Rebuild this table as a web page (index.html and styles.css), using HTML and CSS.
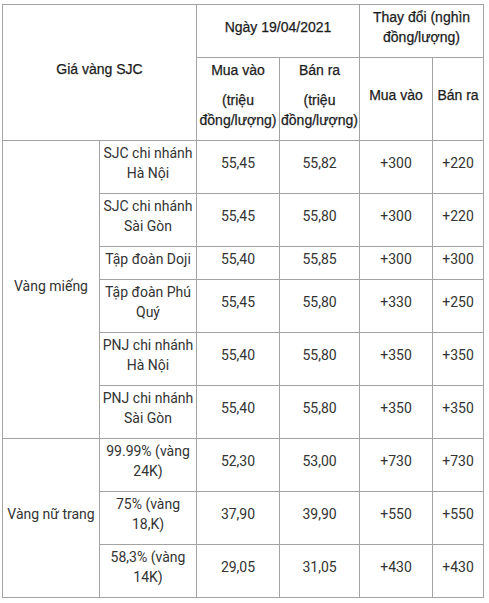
FILE: index.html
```html
<!DOCTYPE html>
<html lang="vi">
<head>
<meta charset="utf-8">
<title>Giá vàng SJC</title>
<link rel="stylesheet" href="styles.css">
</head>
<body>
<table class="gold">
  <colgroup>
    <col class="c1"><col class="c2"><col class="c3"><col class="c4"><col class="c5"><col class="c6">
  </colgroup>
  <thead>
    <tr>
      <th colspan="2" rowspan="2"><p>Giá vàng SJC</p></th>
      <th colspan="2"><p>Ngày 19/04/2021</p></th>
      <th colspan="2"><p>Thay đổi (nghìn đồng/lượng)</p></th>
    </tr>
    <tr>
      <th><p>Mua vào</p><p>(triệu đồng/lượng)</p></th>
      <th><p>Bán ra</p><p>(triệu đồng/lượng)</p></th>
      <th><p>Mua vào</p></th>
      <th><p>Bán ra</p></th>
    </tr>
  </thead>
  <tbody>
    <tr>
      <td rowspan="6"><p>Vàng miếng</p></td>
      <td><p>SJC chi nhánh Hà Nội</p></td>
      <td><p>55,45</p></td><td><p>55,82</p></td><td><p>+300</p></td><td><p>+220</p></td>
    </tr>
    <tr>
      <td><p>SJC chi nhánh Sài Gòn</p></td>
      <td><p>55,45</p></td><td><p>55,80</p></td><td><p>+300</p></td><td><p>+220</p></td>
    </tr>
    <tr>
      <td><p>Tập đoàn Doji</p></td>
      <td><p>55,40</p></td><td><p>55,85</p></td><td><p>+300</p></td><td><p>+300</p></td>
    </tr>
    <tr>
      <td><p>Tập đoàn Phú Quý</p></td>
      <td><p>55,45</p></td><td><p>55,80</p></td><td><p>+330</p></td><td><p>+250</p></td>
    </tr>
    <tr>
      <td><p>PNJ chi nhánh Hà Nội</p></td>
      <td><p>55,40</p></td><td><p>55,80</p></td><td><p>+350</p></td><td><p>+350</p></td>
    </tr>
    <tr>
      <td><p>PNJ chi nhánh Sài Gòn</p></td>
      <td><p>55,40</p></td><td><p>55,80</p></td><td><p>+350</p></td><td><p>+350</p></td>
    </tr>
    <tr>
      <td rowspan="3"><p>Vàng nữ trang</p></td>
      <td><p>99.99% (vàng 24K)</p></td>
      <td><p>52,30</p></td><td><p>53,00</p></td><td><p>+730</p></td><td><p>+730</p></td>
    </tr>
    <tr>
      <td><p>75% (vàng 18,K)</p></td>
      <td><p>37,90</p></td><td><p>39,90</p></td><td><p>+550</p></td><td><p>+550</p></td>
    </tr>
    <tr>
      <td><p>58,3% (vàng 14K)</p></td>
      <td><p>29,05</p></td><td><p>31,05</p></td><td><p>+430</p></td><td><p>+430</p></td>
    </tr>
  </tbody>
</table>
</body>
</html>
```

FILE: styles.css
```css
html, body {
  margin: 0;
  padding: 0;
  background: #ffffff;
}

.gold {
  border-collapse: collapse;
  table-layout: fixed;
  width: 481px;
  margin: 4px 0 0 2px;
  font-family: Roboto, "Liberation Sans", sans-serif;
  font-size: 14px;
  line-height: 20px;
  color: #333333;
}

.c1 { width: 97px; }
.c2 { width: 97px; }
.c3 { width: 83px; }
.c4 { width: 80px; }
.c5 { width: 73px; }
.c6 { width: 51px; }

.gold th,
.gold td {
  border: 1px solid #a3a3a3;
  padding: 2px 1px 0;
  text-align: center;
  vertical-align: middle;
}

.gold th {
  font-family: "Liberation Sans", Arial, sans-serif;
  font-weight: normal;
  color: #1c1c1c;
  -webkit-text-stroke: 0.25px #1c1c1c;
  line-height: 20px;
}

.gold p {
  margin: 0 0 10px;
}
```
